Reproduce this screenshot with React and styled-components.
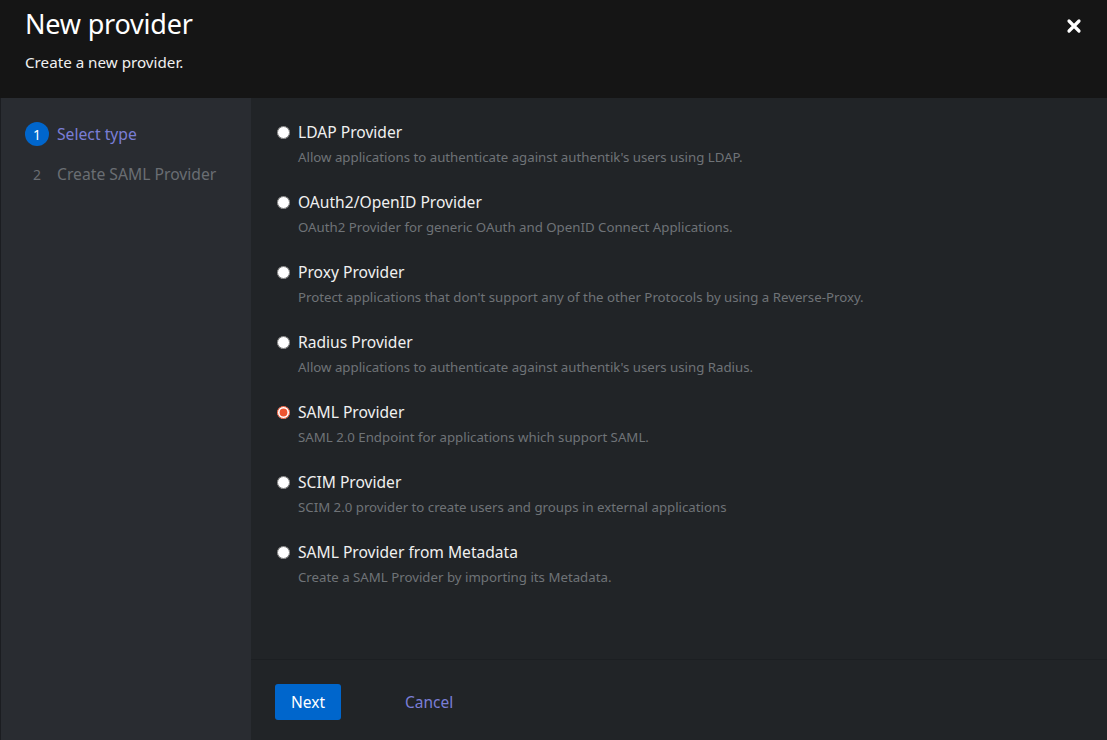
import React, { useState } from 'react';
import styled, { createGlobalStyle } from 'styled-components';

const GlobalStyle = createGlobalStyle`
  html, body {
    margin: 0;
    padding: 0;
    background: #151515;
  }
  body {
    font-family: 'Noto Sans', 'Open Sans', sans-serif;
  }
  * {
    box-sizing: border-box;
  }
`;

const providers = [
  { id: 'ldap', name: 'LDAP Provider', desc: "Allow applications to authenticate against authentik's users using LDAP." },
  { id: 'oauth2', name: 'OAuth2/OpenID Provider', desc: 'OAuth2 Provider for generic OAuth and OpenID Connect Applications.' },
  { id: 'proxy', name: 'Proxy Provider', desc: "Protect applications that don't support any of the other Protocols by using a Reverse-Proxy." },
  { id: 'radius', name: 'Radius Provider', desc: "Allow applications to authenticate against authentik's users using Radius." },
  { id: 'saml', name: 'SAML Provider', desc: 'SAML 2.0 Endpoint for applications which support SAML.' },
  { id: 'scim', name: 'SCIM Provider', desc: 'SCIM 2.0 provider to create users and groups in external applications' },
  { id: 'saml-meta', name: 'SAML Provider from Metadata', desc: 'Create a SAML Provider by importing its Metadata.' },
];

const steps = ['Select type', 'Create SAML Provider'];

function App() {
  const [selected, setSelected] = useState('saml');

  return (
    <Modal>
      <GlobalStyle />
      <Header>
        <div>
          <Title>New provider</Title>
          <Subtitle>Create a new provider.</Subtitle>
        </div>
        <CloseButton aria-label='Close'>
          <svg width='16' height='16' viewBox='0 0 16 16'>
            <path d='M3 3 L13 13 M13 3 L3 13' stroke='#fff' strokeWidth='3.2' strokeLinecap='round' />
          </svg>
        </CloseButton>
      </Header>
      <Body>
        <Nav>
          {steps.map((s, i) => (
            <Step key={s}>
              <StepNumber current={i === 0}>{i + 1}</StepNumber>
              <StepLabel current={i === 0}>{s}</StepLabel>
            </Step>
          ))}
        </Nav>
        <Main>
          <Content>
            {providers.map((p) => (
              <Option key={p.id}>
                <Radio
                  type='radio'
                  name='type'
                  checked={selected === p.id}
                  onChange={() => setSelected(p.id)}
                />
                <OptionText>
                  <OptionName>{p.name}</OptionName>
                  <OptionDesc>{p.desc}</OptionDesc>
                </OptionText>
              </Option>
            ))}
          </Content>
          <Footer>
            <PrimaryButton>Next</PrimaryButton>
            <LinkButton>Cancel</LinkButton>
          </Footer>
        </Main>
      </Body>
    </Modal>
  );
}

export default App;

const Modal = styled.div`
  height: 100vh;
  display: flex;
  flex-direction: column;
  overflow: hidden;
`;

const Header = styled.header`
  height: 98px;
  flex-shrink: 0;
  background: #151515;
  display: flex;
  justify-content: space-between;
  align-items: flex-start;
  padding: 6px 24px 0 25px;
`;

const Title = styled.h1`
  margin: 0;
  font-size: 27px;
  font-weight: 400;
  line-height: 36px;
  color: #fff;
  letter-spacing: -0.2px;
`;

const Subtitle = styled.p`
  margin: 10px 0 0;
  font-size: 15.2px;
  line-height: 20px;
  color: #f0f0f0;
`;

const CloseButton = styled.button`
  background: none;
  border: none;
  padding: 0;
  margin-top: 12px;
  margin-right: 1px;
  cursor: pointer;
  display: flex;
`;

const Body = styled.div`
  flex: 1;
  display: flex;
  min-height: 0;
  border-left: 1px solid #1b1d21;
`;

const Nav = styled.nav`
  width: 250px;
  flex-shrink: 0;
  background: #292c31;
  padding: 24px 0 0 24px;
  display: flex;
  flex-direction: column;
  gap: 16px;
`;

const Step = styled.div`
  display: flex;
  align-items: center;
  gap: 8px;
  height: 24px;
`;

const StepNumber = styled.span`
  width: 24px;
  height: 24px;
  border-radius: 50%;
  display: flex;
  align-items: center;
  justify-content: center;
  font-size: 14px;
  color: ${(p) => (p.current ? '#fff' : '#6a6e73')};
  background: ${(p) => (p.current ? '#0066cc' : 'transparent')};
`;

const StepLabel = styled.span`
  font-size: 15.7px;
  color: ${(p) => (p.current ? '#7a7ed6' : '#6a6e73')};
`;

const Main = styled.main`
  flex: 1;
  display: flex;
  flex-direction: column;
  background: #212427;
`;

const Content = styled.div`
  flex: 1;
  padding: 23px 24px 0 24px;
  display: flex;
  flex-direction: column;
  gap: 24px;
`;

const Option = styled.label`
  display: flex;
  align-items: flex-start;
  gap: 8px;
  cursor: pointer;
`;

const Radio = styled.input`
  margin: 5px 0 0 2px;
  width: 13px;
  height: 13px;
  accent-color: #ee5430;
  cursor: pointer;
`;

const OptionText = styled.div`
  display: flex;
  flex-direction: column;
  gap: 4px;
`;

const OptionName = styled.span`
  font-size: 15.6px;
  line-height: 22px;
  color: #f0f0f0;
`;

const OptionDesc = styled.span`
  font-size: 13.25px;
  line-height: 20px;
  color: #6f7377;
`;

const Footer = styled.footer`
  height: 81px;
  flex-shrink: 0;
  border-top: 1px solid #1c1f22;
  display: flex;
  align-items: center;
  gap: 64px;
  padding: 4px 24px 0;
`;

const PrimaryButton = styled.button`
  background: #0066cc;
  color: #fff;
  border: none;
  border-radius: 3px;
  height: 36px;
  padding: 0 16px;
  font-family: inherit;
  font-size: 15.5px;
  cursor: pointer;
`;

const LinkButton = styled.button`
  background: none;
  border: none;
  padding: 0;
  color: #7a7ed6;
  font-family: inherit;
  font-size: 15.5px;
  cursor: pointer;
`;
